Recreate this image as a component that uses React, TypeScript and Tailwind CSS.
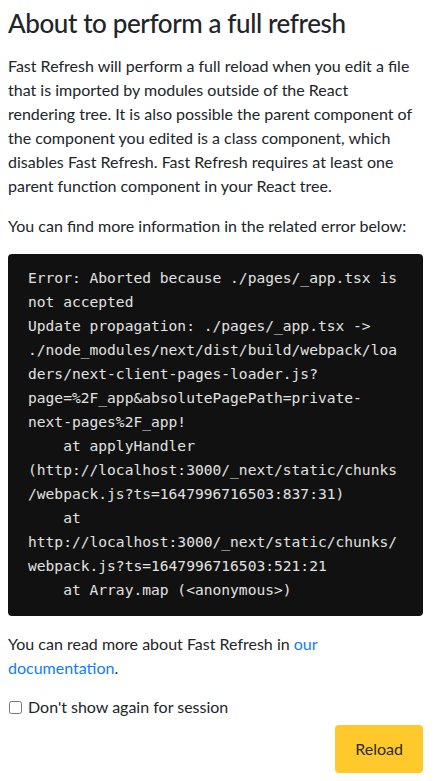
export default function App() {
    const trace = [
        "Error: Aborted because ./pages/_app.tsx is",
        "not accepted",
        "Update propagation: ./pages/_app.tsx ->",
        "./node_modules/next/dist/build/webpack/loa",
        "ders/next-client-pages-loader.js?",
        "page=%2F_app&absolutePagePath=private-",
        "next-pages%2F_app!",
        "    at applyHandler",
        "(http://localhost:3000/_next/static/chunks",
        "/webpack.js?ts=1647996716503:837:31)",
        "    at",
        "http://localhost:3000/_next/static/chunks/",
        "webpack.js?ts=1647996716503:521:21",
        "    at Array.map (<anonymous>)",
    ];

    return (
        <div className="min-h-[781px] bg-white pl-2 pr-[11px] pt-[6px] text-[16px] leading-6 text-[#212529] font-['Lato',sans-serif]">
            <h3 className="mb-[14px] text-[26px] leading-[34px] tracking-[-0.4px] font-medium">
                About to perform a full refresh
            </h3>
            <p className="mb-4">
                Fast Refresh will perform a full reload when you edit a file
                <br />
                that is imported by modules outside of the React
                <br />
                rendering tree. It is also possible the parent component of
                <br />
                the component you edited is a class component, which
                <br />
                disables Fast Refresh. Fast Refresh requires at least one
                <br />
                parent function component in your React tree.
            </p>
            <p className="mb-4">You can find more information in the related error below:</p>
            <pre className="mb-4 rounded bg-[#111111] px-5 pt-3 pb-[14px] text-[14.6px] leading-6 text-[#e2e2e2] font-['DejaVu_Sans_Mono',monospace] whitespace-pre">
                {trace.join("\n")}
            </pre>
            <p className="mb-[15px]">
                You can read more about Fast Refresh in{" "}
                <a href="#" className="text-[#0d7dfd]">our</a>
                <br />
                <a href="#" className="text-[#0d7dfd]">documentation</a>.
            </p>
            <label className="flex items-center gap-1.5">
                <input type="checkbox" className="ml-[1px] h-[13px] w-[13px]" />
                <span>Don't show again for session</span>
            </label>
            <div className="mt-[6px] flex justify-end">
                <button className="rounded bg-[#ffc92c] px-5 py-3 text-[#2b2b2b]">
                    Reload
                </button>
            </div>
        </div>
    );
}
